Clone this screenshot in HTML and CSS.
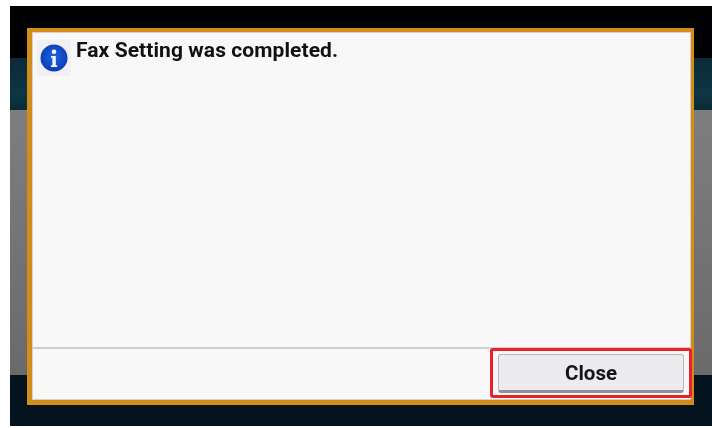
FILE: index.html
```html
<!DOCTYPE html>
<html lang="en">
<head>
<meta charset="utf-8">
<title>Fax Setting</title>
<link rel="stylesheet" href="styles.css">
</head>
<body>
<div class="screen">
  <div class="band band-top"></div>
  <div class="band band-teal"></div>
  <div class="band band-gray"></div>
  <div class="band band-bottom"></div>
  <div class="dialog">
    <div class="message">
      <div class="icon-tile">
        <svg class="info-icon" viewBox="0 0 28 28" aria-hidden="true">
          <defs>
            <radialGradient id="blue" cx="50%" cy="45%" r="58%">
              <stop offset="0" stop-color="#1f68e4"/>
              <stop offset="1" stop-color="#0a38b4"/>
            </radialGradient>
          </defs>
          <circle cx="14" cy="14" r="13.5" fill="url(#blue)"/>
          <circle cx="14" cy="7.8" r="2.3" fill="#f2f6ff"/>
          <path d="M11 12h4.8v9.2h1.4v1.8h-6.2v-1.8h1.4v-7.4h-1.4z" fill="#f2f6ff"/>
        </svg>
      </div>
      <p class="message-text">Fax Setting was completed.</p>
    </div>
    <div class="footer">
      <div class="highlight">
        <button class="close-btn" type="button">Close</button>
      </div>
    </div>
  </div>
</div>
</body>
</html>
```
FILE: styles.css
```css
html, body {
  margin: 0;
  padding: 0;
  background: #ffffff;
}
body {
  width: 712px;
  height: 428px;
  overflow: hidden;
  font-family: "Roboto", "Liberation Sans", sans-serif;
}
.screen {
  position: relative;
  margin: 6px 0 0 10px;
  width: 702px;
  height: 420px;
  display: flex;
  flex-direction: column;
  filter: blur(0.45px);
}
.band-top {
  height: 52px;
  background: #020204;
}
.band-teal {
  height: 52px;
  background: linear-gradient(#0a2a36, #0e3644 70%, #0a2a36);
}
.band-gray {
  height: 265px;
  background: linear-gradient(#7e7e7e, #6a6a6a);
}
.band-bottom {
  height: 51px;
  background: #04131d;
}
.dialog {
  position: absolute;
  left: 17px;
  top: 22px;
  width: 667px;
  height: 377px;
  box-sizing: border-box;
  border-style: solid;
  border-color: #d18c1a;
  border-width: 4px 3px 5px 5px;
  box-shadow: inset 0 0 0 1px #d9d2c4;
  background: #f8f8f9;
  display: flex;
  flex-direction: column;
}
.message {
  flex: 1;
  display: flex;
  align-items: flex-start;
  padding: 6px 0 0 5px;
  gap: 5px;
}
.icon-tile {
  width: 34px;
  height: 36px;
  margin-top: 2px;
  box-sizing: border-box;
  background: #f0f1f4;
  border-radius: 3px;
  display: flex;
  align-items: center;
  justify-content: center;
  flex: none;
}
.info-icon {
  width: 28px;
  height: 28px;
}
.message-text {
  margin: 0;
  font-size: 21px;
  line-height: 24px;
  letter-spacing: 0.08px;
  font-weight: 700;
  color: #111113;
}
.footer {
  height: 53px;
  box-sizing: border-box;
  border-top: 2px solid #cfcfd2;
  display: flex;
  justify-content: flex-end;
  align-items: flex-end;
}
.highlight {
  box-sizing: border-box;
  width: 202px;
  height: 50px;
  margin: 0 -1px 2px 0;
  padding: 3px 5px 2px;
  border: 3px solid #e8222a;
  border-radius: 3px;
  display: flex;
}
.close-btn {
  flex: 1;
  padding: 0;
  border: 1px solid #b8b8bc;
  border-bottom: 3px solid #8f9094;
  border-radius: 3px;
  background: #ececee;
  font-family: inherit;
  font-size: 20.5px;
  font-weight: 700;
  color: #161618;
}
```
